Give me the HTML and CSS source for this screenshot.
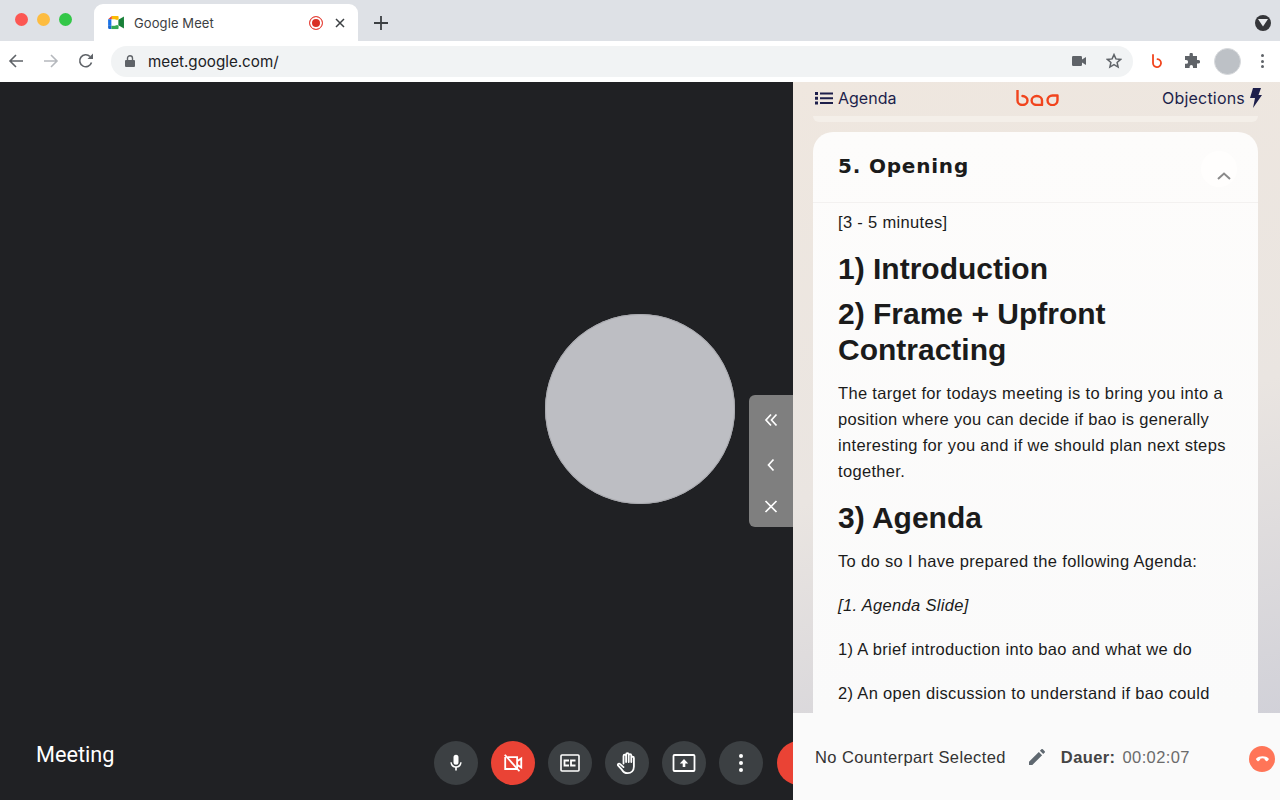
FILE: index.html
```html
<!DOCTYPE html>
<html lang="en">
<head>
<meta charset="utf-8">
<title>Google Meet</title>
<link rel="stylesheet" href="styles.css">
</head>
<body>
<div class="window">
  <header class="chrome">
    <div class="tabstrip">
      <div class="lights"><span class="light red"></span><span class="light yellow"></span><span class="light green"></span></div>
      <div class="tab">
        <svg class="favicon" viewBox="0 0 18 15" width="17" height="14">
          <path fill="#fbbc04" d="M4 0h7v3.5H4z"/><path fill="#ea4335" d="M4 0v3.5H0z"/><path fill="#1a73e8" d="M0 3.5h3.5V10H0z"/><path fill="#1967d2" d="M0 10h3.5v4H1.5A1.5 1.5 0 0 1 0 12.500z"/><path fill="#34a853" d="M3.500 10.500H11V14H3.500z"/><path fill="#188038" d="M11 4l6-3.500v13L11 10z"/><path fill="#fbbc04" d="M8 0h1.500A1.500 1.500 0 0 1 11 1.500V4H8z"/><path fill="#34a853" d="M8 10h3v2.500A1.500 1.500 0 0 1 9.500 14H8z"/>
        </svg>
        <span class="tab-title">Google Meet</span>
        <span class="rec"></span>
        <svg class="tab-close" viewBox="0 0 10 10" width="10" height="10"><path d="M1 1l8 8M9 1l-8 8"/></svg>
      </div>
      <svg class="new-tab" viewBox="0 0 14 14" width="14" height="14"><path d="M7 0v14M0 7h14"/></svg>
      <div class="strip-end"><span class="media-btn"><svg viewBox="0 0 10 8" width="10" height="8"><path fill="#e8eaed" d="M0 0h10L5 7.500z"/></svg></span></div>
    </div>
    <div class="toolbar">
      <svg class="nav" viewBox="0 0 16 16" width="16" height="16"><path d="M15 8H2M8 2L2 8l6 6"/></svg>
      <svg class="nav nav-off" viewBox="0 0 16 16" width="16" height="16"><path d="M1 8h13M8 2l6 6-6 6"/></svg>
      <svg class="nav" viewBox="0 0 16 16" width="16" height="16"><path d="M13.500 9.500A6 6 0 1 1 12 3.500"/><path class="solid" d="M9.500 6H15V.5z"/></svg>
      <div class="omnibox">
        <svg class="lock" viewBox="0 0 10 12" width="10" height="12"><path fill="#5f6368" d="M1 5h8a1 1 0 0 1 1 1v5a1 1 0 0 1-1 1H1a1 1 0 0 1-1-1V6a1 1 0 0 1 1-1z"/><path fill="none" stroke="#5f6368" stroke-width="1.400" d="M2.500 5V3.200a2.500 2.500 0 0 1 5 0V5"/></svg>
        <span class="url">meet.google.com/</span>
        <svg class="cam" viewBox="0 0 14 10" width="14" height="10"><rect width="10" height="10" rx="1.200" fill="#5f6368"/><path fill="#5f6368" d="M10 3.500L14 1v8l-4-2.500z"/></svg>
        <svg class="star" viewBox="0 0 16 16" width="16" height="16"><path d="M8 1.600l1.900 4.300 4.700.5-3.500 3.100 1 4.600L8 11.700l-4.100 2.400 1-4.600L1.400 6.400l4.700-.5z"/></svg>
      </div>
      <svg class="ext-b" viewBox="0 0 12 14" width="12" height="14"><path d="M2 1v8a4 4 0 1 0 4.500-3.900"/></svg>
      <svg class="puzzle" viewBox="0 0 16 16" width="16" height="16"><path fill="#5f6368" d="M5.500 1.500a1.700 1.700 0 0 1 3.400 0V3H13v4h1.300a1.800 1.800 0 0 1 0 3.600H13V15H9v-1.300a1.700 1.700 0 0 0-3.400 0V15H1v-4.200h1.200a1.900 1.900 0 0 0 0-3.800H1V3h4.500z"/></svg>
      <span class="avatar"></span>
      <span class="kebab"><i></i><i></i><i></i></span>
    </div>
  </header>

  <main class="content">
    <section class="stage">
      <div class="tile-area"><div class="tile"></div></div>
      <div class="handle">
        <svg viewBox="0 0 14 14" width="14" height="14"><path d="M7 1.500L2 7l5 5.500M12.500 1.500L7.500 7l5 5.500"/></svg>
        <svg viewBox="0 0 14 14" width="14" height="14"><path d="M9.500 1.500L4.500 7l5 5.500"/></svg>
        <svg viewBox="0 0 14 14" width="14" height="14"><path d="M1.500 2l11 11M12.500 2l-11 11"/></svg>
      </div>
      <div class="callbar">
        <div class="meeting-name">Meeting</div>
        <div class="controls">
          <span class="ctl"><svg viewBox="0 0 24 24" width="20" height="20"><path fill="#fff" d="M12 14a3 3 0 0 0 3-3V5a3 3 0 0 0-6 0v6a3 3 0 0 0 3 3zm5-3a5 5 0 0 1-10 0H5.300a6.700 6.700 0 0 0 5.700 6.600V21h2v-3.400A6.700 6.700 0 0 0 18.700 11z"/></svg></span>
          <span class="ctl ctl-red"><svg viewBox="0 0 24 24" width="22" height="22"><path fill="none" stroke="#fff" stroke-width="2" d="M6 5.500h10.500v13H3.500V5.500M16.500 10L21 7v10l-4.500-3"/><path stroke="#fff" stroke-width="2" d="M3 3l16 18"/></svg></span>
          <span class="ctl"><svg viewBox="0 0 24 24" width="24" height="24"><rect x="3" y="4" width="18" height="16" rx="1" fill="none" stroke="#fff" stroke-width="1.600"/><path fill="none" stroke="#fff" stroke-width="1.800" d="M11 9.500H6.500v5H11M17.500 9.500H13v5h4.500"/></svg></span>
          <span class="ctl"><svg viewBox="0 0 24 24" width="24" height="24"><path fill="none" stroke="#fff" stroke-width="1.800" stroke-linejoin="round" stroke-linecap="round" d="M8.500 12.500V5a1.300 1.300 0 0 1 2.600 0v6V3.500a1.300 1.300 0 0 1 2.600 0V11V4.500a1.300 1.300 0 0 1 2.600 0V11V7a1.300 1.300 0 0 1 2.600 0v8.500c0 4-2.700 6.700-6.300 6.700-3 0-4.500-1.400-5.700-3.500L3 14.300c-.6-1.200 1.100-2.300 2.200-1.200l3.300 3"/></svg></span>
          <span class="ctl"><svg viewBox="0 0 24 24" width="24" height="24"><rect x="1.500" y="4" width="21" height="16" rx="1" fill="none" stroke="#fff" stroke-width="1.800"/><path fill="#fff" d="M12 8l4.200 4.500H13.300V16h-2.600v-3.500H7.800z"/></svg></span>
          <span class="ctl"><span class="dots"><i></i><i></i><i></i></span></span>
          <span class="ctl ctl-red"></span>
        </div>
      </div>
    </section>

    <aside class="panel">
      <div class="panel-head">
        <div class="head-link">
          <svg viewBox="0 0 18 14" width="18" height="14"><path fill="#1d1f4b" d="M0 1h3v3H0zM0 5.700h3v3H0zM0 10.400h3v3H0zM5 1.500h13v2H5zM5 6.200h13v2H5zM5 10.900h13v2H5z"/></svg>
          <span>Agenda</span>
        </div>
        <svg class="logo" viewBox="0 0 43 16" width="43" height="16"><path d="M1.500 .5V10.500A5 4.500 0 1 0 6.500 6M26 15V10.500A5.200 4.500 0 1 0 20.800 15H26M41.500 5.500H36.500A5 4.800 0 1 0 41.500 10.300Z"/></svg>
        <div class="head-link head-right">
          <span>Objections</span>
          <svg viewBox="0 0 12 20" width="12" height="20"><path fill="#1d1f4b" d="M3 0h8L8.500 7H12L3 20l2-10H0z"/></svg>
        </div>
      </div>
      <div class="prev-card"></div>
      <article class="card">
        <div class="card-head">
          <h1>5. Opening</h1>
          <span class="collapse"><svg viewBox="0 0 14 8" width="14" height="8"><path d="M1 7l6-5.500L13 7"/></svg></span>
        </div>
        <div class="card-body">
          <p class="first">[3 - 5 minutes]</p>
          <h2>1) Introduction</h2>
          <h2>2) Frame + Upfront Contracting</h2>
          <p>The target for todays meeting is to bring you into a position where you can decide if bao is generally interesting for you and if we should plan next steps together.</p>
          <h2>3) Agenda</h2>
          <p>To do so I have prepared the following Agenda:</p>
          <p><em>[1. Agenda Slide]</em></p>
          <p>1) A brief introduction into bao and what we do</p>
          <p>2) An open discussion to understand if bao could thematically address your business</p>
        </div>
      </article>
      <div class="panel-foot">
        <span class="counterpart">No Counterpart Selected</span>
        <svg class="pencil" viewBox="0 0 16 16" width="16" height="16"><path fill="#5f6870" d="M0 16v-3.300L9.800 2.900l3.300 3.300L3.300 16zM10.900 1.800L12.400.3a1 1 0 0 1 1.400 0l1.900 1.900a1 1 0 0 1 0 1.400l-1.500 1.500z"/></svg>
        <span class="duration"><b>Dauer:</b><span class="time">00:02:07</span></span>
        <span class="hangup"><svg viewBox="0 0 14 7" width="13" height="7"><path fill="#fff" d="M7 0C4.300 0 1.800.8.300 2.300c-.4.400-.4 1 0 1.400l1.300 1.400c.4.300.9.300 1.300 0l1.300-1c.2-.2.300-.4.300-.7V2.600a7 7 0 0 1 4.800 0v.8c0 .3.100.5.300.7l1.300 1c.4.300.9.300 1.300 0l1.300-1.400c.4-.4.400-1 0-1.400C12.200.8 9.700 0 7 0z"/></svg></span>
      </div>
    </aside>
  </main>
</div>
</body>
</html>
```

FILE: styles.css
```css
* { box-sizing: border-box; }
html, body { margin: 0; height: 100%; overflow: hidden; }
body { font-family: "Liberation Sans", Arial, sans-serif; }
.window { width: 1280px; height: 800px; display: flex; flex-direction: column; overflow: hidden; }

.chrome { height: 82px; flex: none; background: #fff; }
.tabstrip { height: 41px; background: #dee1e6; display: flex; align-items: flex-end; position: relative; }
.lights { width: 94px; height: 41px; padding: 13px 0 0 15px; display: flex; gap: 9px; flex: none; }
.light { width: 13px; height: 13px; border-radius: 50%; }
.red { background: #fc5753; }
.yellow { background: #fdbc40; }
.green { background: #33c748; }
.tab { width: 264px; height: 37px; background: #fff; border-radius: 9px 9px 0 0; display: flex; align-items: center; padding: 0 13px 0 14px; flex: none; }
.favicon { flex: none; }
.tab-title { font: 13px Inter, "Liberation Sans", sans-serif; color: #3c4043; margin-left: 9px; flex: 1; letter-spacing: .1px; }
.rec { width: 14px; height: 14px; border-radius: 50%; background: #d93025; box-shadow: inset 0 0 0 2px #fff; border: 1px solid #e8453c; flex: none; }
.tab-close { margin-left: 12px; fill: none; stroke: #3c4043; stroke-width: 1.500; flex: none; }
.new-tab { margin: 0 0 11px 16px; fill: none; stroke: #3c4043; stroke-width: 1.800; flex: none; }
.strip-end { margin-left: auto; padding: 0 9px 10px 0; display: flex; }
.media-btn { width: 16px; height: 16px; border-radius: 50%; background: #35363a; display: flex; align-items: center; justify-content: center; }

.toolbar { height: 40px; display: flex; align-items: center; padding-left: 8px; }
.nav { fill: none; stroke: #5f6368; stroke-width: 1.600; margin-right: 19px; flex: none; }
.nav:nth-child(3) { margin-right: 17px; }
.nav-off { stroke: #b5b8bd; }
.nav .solid { fill: #5f6368; stroke: none; }
.omnibox { width: 1022px; height: 31px; border-radius: 16px; background: #f1f3f4; display: flex; align-items: center; padding: 0 11px 0 14px; flex: none; }
.lock { flex: none; }
.url { font: 15.200px Inter, "Liberation Sans", sans-serif; color: #202124; margin-left: 13px; flex: 1; }
.cam { flex: none; margin-right: 20px; }
.star { fill: none; stroke: #5f6368; stroke-width: 1.500; flex: none; }
.ext-b { margin-left: 18px; fill: none; stroke: #f1441d; stroke-width: 1.800; stroke-linecap: round; flex: none; }
.puzzle { margin-left: 21px; flex: none; }
.avatar { width: 27px; height: 27px; border-radius: 50%; background: #bdc1c6; border: 1px solid #d7d9dc; margin-left: 14px; flex: none; }
.kebab { display: flex; flex-direction: column; gap: 2.500px; margin-left: 20px; }
.kebab i { width: 3px; height: 3px; border-radius: 50%; background: #5f6368; }

.content { flex: 1; display: flex; min-height: 0; }
.stage { width: 793px; flex: none; background: #202124; display: flex; flex-direction: column; position: relative; overflow: hidden; }
.tile-area { flex: 1; display: flex; justify-content: flex-end; align-items: center; padding: 18px 58px 0 0; }
.tile { width: 190px; height: 190px; border-radius: 50%; background: #bdbec3; box-shadow: inset 0 0 0 1px #a9aaaf; }
.handle { position: absolute; right: 0; top: 313px; width: 44px; height: 132px; background: #7f7f7f; border-radius: 6px 0 0 6px; display: flex; flex-direction: column; align-items: center; padding-top: 18px; }
.handle svg { fill: none; stroke: #fff; stroke-width: 1.700; flex: none; }
.handle svg:nth-child(2) { margin: 31px 0 27px; }
.callbar { height: 82px; flex: none; display: flex; align-items: center; padding-top: 8px; }
.meeting-name { width: 434px; padding: 0 0 18px 36px; color: #fff; font: 21.700px Roboto, "Liberation Sans", sans-serif; flex: none; }
.controls { display: flex; gap: 13.100px; flex: none; }
.ctl { width: 44px; height: 44px; border-radius: 50%; background: #3c4043; display: flex; align-items: center; justify-content: center; flex: none; }
.ctl-red { background: #ea4335; }
.dots { display: flex; flex-direction: column; gap: 3px; }
.dots i { width: 4px; height: 4px; border-radius: 50%; background: #fff; }

.panel { flex: 1; min-width: 0; display: flex; flex-direction: column; background: linear-gradient(165deg, #efe7df 0%, #eae5e1 50%, #cbccd6 100%); }
.panel-head { height: 34px; flex: none; display: flex; align-items: center; justify-content: space-between; padding: 0 18px 2px 22px; }
.head-link { display: flex; align-items: center; gap: 5px; color: #1d1f4b; font: 16px Inter, "Liberation Sans", sans-serif; }
.head-right span { letter-spacing: .2px; }
.logo { fill: none; stroke: #f1441d; stroke-width: 2.400; stroke-linecap: round; stroke-linejoin: round; margin-left: 17px; }
.prev-card { height: 6px; margin: 0 22px 0 20px; flex: none; background: #f4efe9; border-radius: 0 0 16px 16px; }
.card { flex: 1; min-height: 0; margin: 10px 22px 0 20px; background: linear-gradient(180deg, #fdfcfb 0%, #fafafa 100%); border-radius: 20px 20px 0 0; overflow: hidden; }
.card-head { height: 71px; padding: 0 21px 0 25px; border-bottom: 1px solid #f3f1f0; display: flex; justify-content: space-between; align-items: center; }
h1 { margin: 0 0 2px; font: 700 20px "DejaVu Sans", sans-serif; color: #1b1b1b; letter-spacing: .8px; }
.collapse { width: 36px; height: 36px; border-radius: 50%; background: #fffefd; display: flex; align-items: center; justify-content: center; margin-top: 4px; }
.collapse svg { fill: none; stroke: #8a8a8a; stroke-width: 2; transform: translate(5px, 7px); }
.card-body { padding: 6px 25px 0; color: #1b1b1b; font-size: 16.500px; line-height: 26px; letter-spacing: .33px; }
.card-body p { margin: 0 0 18px; }
.card-body p.first { margin: 0 0 20px; }
h2 { margin: 0 0 12px; font: 700 30px/36px "Liberation Sans", sans-serif; color: #1b1b1b; letter-spacing: 0; }
h2 + h2 { margin-top: -3px; }
p + h2 { margin-top: -2px; }
.card-body p.first + h2 { margin-top: -4px; }
.panel-foot { height: 87px; flex: none; background: #fafafa; display: flex; align-items: center; padding: 2px 22px 0; }
.counterpart { font-size: 16.500px; color: #333; letter-spacing: .4px; }
.pencil { margin: -2px 0 0 23px; flex: none; }
.duration { margin-left: 16px; font-size: 16.500px; color: #6b6b6b; letter-spacing: .4px; }
.duration b { color: #444; }
.time { margin-left: 7px; }
.hangup { width: 26px; height: 26px; border-radius: 50%; background: #ff7558; display: flex; align-items: center; justify-content: center; margin: 3px -17px 0 auto; }
```
